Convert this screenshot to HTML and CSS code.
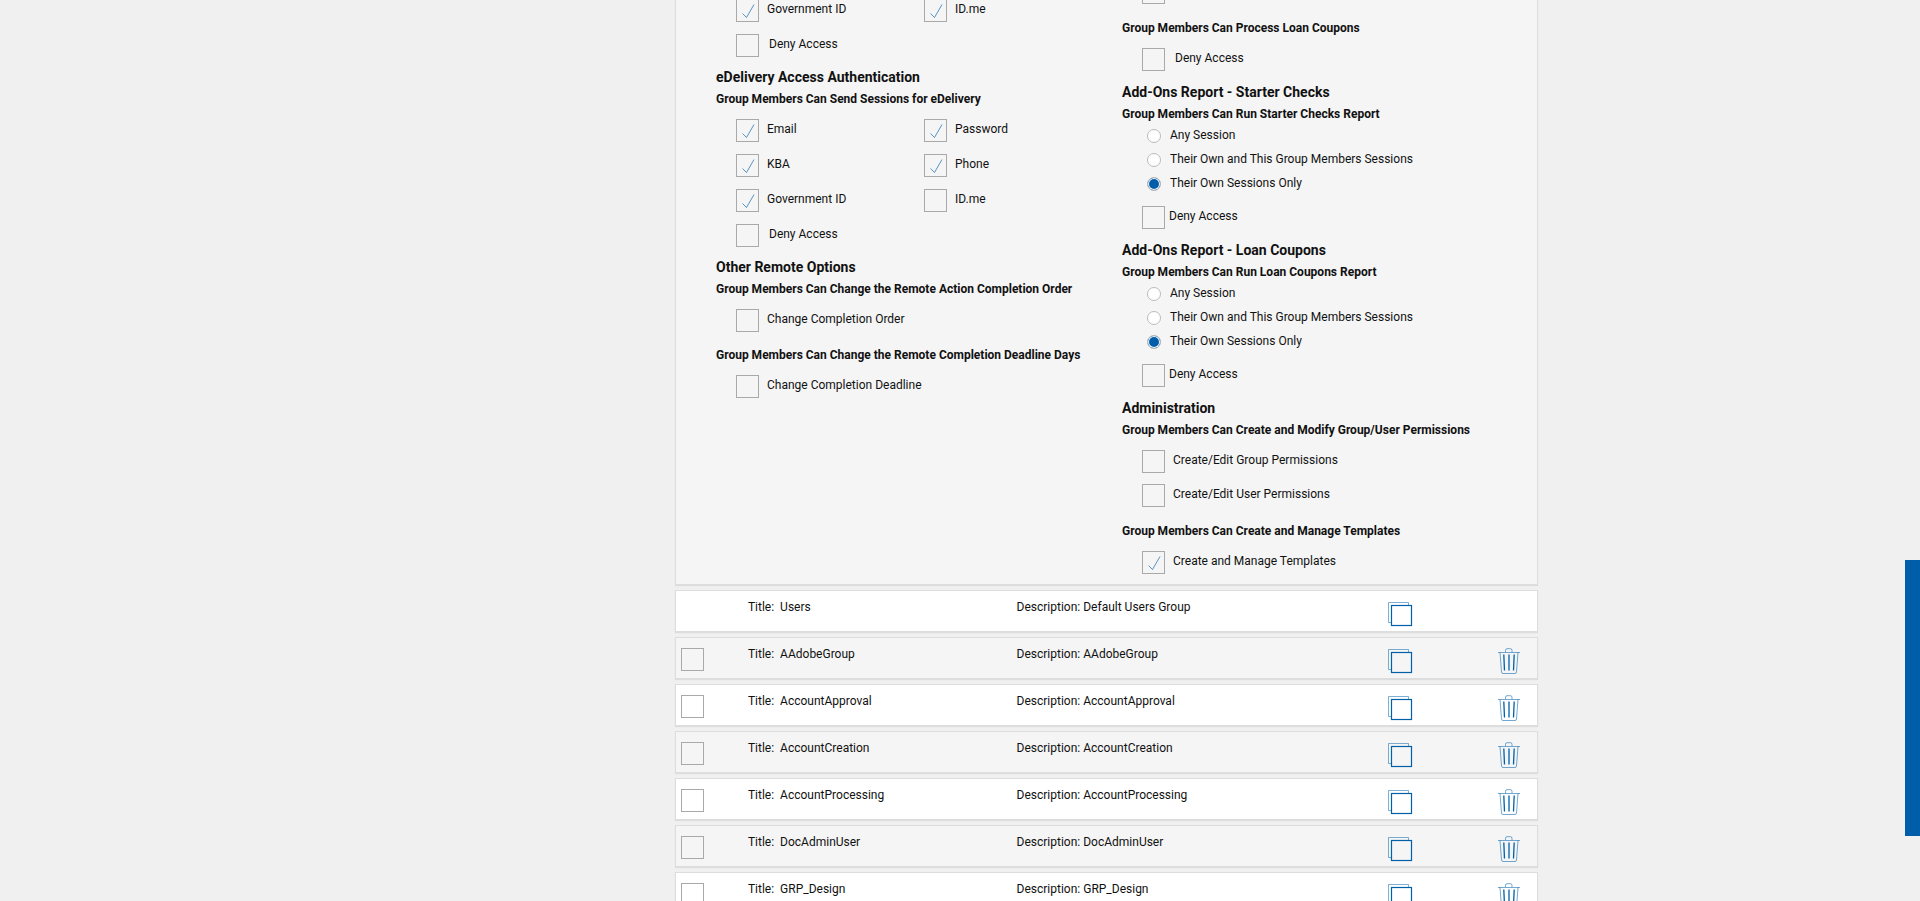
FILE: index.html
```html
<!DOCTYPE html>
<html lang="en">
<head>
    <meta charset="UTF-8">
    <meta name="viewport" content="width=device-width, initial-scale=1.0">
    <title>Group Permissions</title>
    <link rel="stylesheet" href="styles.css">
</head>
<body>
    <!-- icons shared by the group rows -->
    <svg class="icon-defs" aria-hidden="true">
        <symbol id="icon-copy" viewBox="0 0 26 26">
            <path d="M4 21.500H1.500V1.500H21.500V4" fill="none" stroke="#0060a9" stroke-opacity=".5"/>
            <rect x="4.500" y="4.500" width="20" height="20" fill="none" stroke="#0060a9" stroke-width="1.200"/>
        </symbol>
        <symbol id="icon-trash" viewBox="0 0 22 26">
            <path d="M0 4.500H22M7.500 4V2.500Q7.500 .700 9 .700H12.500Q14 .700 14 2.500V4M2 4.500L3.500 24Q3.700 25.500 5 25.500H17Q18.300 25.500 18.500 24L20 4.500" fill="none" stroke="#0060a9" stroke-opacity=".55"/>
            <path d="M5.800 6.500L6.500 22.500M11 6.500V22.500M16.200 6.500L15.500 22.500" fill="none" stroke="#0060a9" stroke-width="1.300"/>
        </symbol>
    </svg>

    <main class="page">
        <section class="panel">
            <div class="panel-left">
                <div class="options two-col first">
                    <label class="option"><input type="checkbox" checked>Government ID</label>
                    <label class="option"><input type="checkbox" checked>ID.me</label>
                    <label class="option deny"><input type="checkbox">Deny Access</label>
                </div>

                <h2>eDelivery Access Authentication</h2>
                <h3>Group Members Can Send Sessions for eDelivery</h3>
                <div class="options two-col">
                    <label class="option"><input type="checkbox" checked>Email</label>
                    <label class="option"><input type="checkbox" checked>Password</label>
                    <label class="option"><input type="checkbox" checked>KBA</label>
                    <label class="option"><input type="checkbox" checked>Phone</label>
                    <label class="option"><input type="checkbox" checked>Government ID</label>
                    <label class="option"><input type="checkbox">ID.me</label>
                    <label class="option deny"><input type="checkbox">Deny Access</label>
                </div>

                <h2>Other Remote Options</h2>
                <h3>Group Members Can Change the Remote Action Completion Order</h3>
                <div class="options">
                    <label class="option"><input type="checkbox">Change Completion Order</label>
                </div>
                <h3>Group Members Can Change the Remote Completion Deadline Days</h3>
                <div class="options">
                    <label class="option"><input type="checkbox">Change Completion Deadline</label>
                </div>
            </div>

            <div class="panel-right">
                <div class="options first">
                    <input type="checkbox" aria-label="Deny Access">
                </div>
                <h3>Group Members Can Process Loan Coupons</h3>
                <div class="options">
                    <label class="option deny"><input type="checkbox">Deny Access</label>
                </div>

                <h2>Add-Ons Report - Starter Checks</h2>
                <h3>Group Members Can Run Starter Checks Report</h3>
                <div class="radios">
                    <label class="radio"><input type="radio" name="starter">Any Session</label>
                    <label class="radio"><input type="radio" name="starter">Their Own and This Group Members Sessions</label>
                    <label class="radio"><input type="radio" name="starter" checked>Their Own Sessions Only</label>
                </div>
                <div class="options">
                    <label class="option close"><input type="checkbox">Deny Access</label>
                </div>

                <h2>Add-Ons Report - Loan Coupons</h2>
                <h3>Group Members Can Run Loan Coupons Report</h3>
                <div class="radios">
                    <label class="radio"><input type="radio" name="coupons">Any Session</label>
                    <label class="radio"><input type="radio" name="coupons">Their Own and This Group Members Sessions</label>
                    <label class="radio"><input type="radio" name="coupons" checked>Their Own Sessions Only</label>
                </div>
                <div class="options">
                    <label class="option close"><input type="checkbox">Deny Access</label>
                </div>

                <h2>Administration</h2>
                <h3>Group Members Can Create and Modify Group/User Permissions</h3>
                <div class="options">
                    <label class="option"><input type="checkbox">Create/Edit Group Permissions</label>
                    <label class="option"><input type="checkbox">Create/Edit User Permissions</label>
                </div>
                <h3>Group Members Can Create and Manage Templates</h3>
                <div class="options">
                    <label class="option"><input type="checkbox" checked>Create and Manage Templates</label>
                </div>
            </div>
        </section>

        <ul class="groups">
            <li class="group">
                <span></span>
                <div class="title"><span>Title:</span><span>Users</span></div>
                <div>Description: Default Users Group</div>
                <button type="button" aria-label="Copy Users"><svg width="26" height="26"><use href="#icon-copy"/></svg></button>
            </li>
            <li class="group">
                <input type="checkbox" aria-label="Select AAdobeGroup">
                <div class="title"><span>Title:</span><span>AAdobeGroup</span></div>
                <div>Description: AAdobeGroup</div>
                <button type="button" aria-label="Copy AAdobeGroup"><svg width="26" height="26"><use href="#icon-copy"/></svg></button>
                <button type="button" aria-label="Delete AAdobeGroup"><svg width="22" height="26"><use href="#icon-trash"/></svg></button>
            </li>
            <li class="group">
                <input type="checkbox" aria-label="Select AccountApproval">
                <div class="title"><span>Title:</span><span>AccountApproval</span></div>
                <div>Description: AccountApproval</div>
                <button type="button" aria-label="Copy AccountApproval"><svg width="26" height="26"><use href="#icon-copy"/></svg></button>
                <button type="button" aria-label="Delete AccountApproval"><svg width="22" height="26"><use href="#icon-trash"/></svg></button>
            </li>
            <li class="group">
                <input type="checkbox" aria-label="Select AccountCreation">
                <div class="title"><span>Title:</span><span>AccountCreation</span></div>
                <div>Description: AccountCreation</div>
                <button type="button" aria-label="Copy AccountCreation"><svg width="26" height="26"><use href="#icon-copy"/></svg></button>
                <button type="button" aria-label="Delete AccountCreation"><svg width="22" height="26"><use href="#icon-trash"/></svg></button>
            </li>
            <li class="group">
                <input type="checkbox" aria-label="Select AccountProcessing">
                <div class="title"><span>Title:</span><span>AccountProcessing</span></div>
                <div>Description: AccountProcessing</div>
                <button type="button" aria-label="Copy AccountProcessing"><svg width="26" height="26"><use href="#icon-copy"/></svg></button>
                <button type="button" aria-label="Delete AccountProcessing"><svg width="22" height="26"><use href="#icon-trash"/></svg></button>
            </li>
            <li class="group">
                <input type="checkbox" aria-label="Select DocAdminUser">
                <div class="title"><span>Title:</span><span>DocAdminUser</span></div>
                <div>Description: DocAdminUser</div>
                <button type="button" aria-label="Copy DocAdminUser"><svg width="26" height="26"><use href="#icon-copy"/></svg></button>
                <button type="button" aria-label="Delete DocAdminUser"><svg width="22" height="26"><use href="#icon-trash"/></svg></button>
            </li>
            <li class="group">
                <input type="checkbox" aria-label="Select GRP_Design">
                <div class="title"><span>Title:</span><span>GRP_Design</span></div>
                <div>Description: GRP_Design</div>
                <button type="button" aria-label="Copy GRP_Design"><svg width="26" height="26"><use href="#icon-copy"/></svg></button>
                <button type="button" aria-label="Delete GRP_Design"><svg width="22" height="26"><use href="#icon-trash"/></svg></button>
            </li>
        </ul>
    </main>

    <button type="button" class="side-tab" aria-label="Open side panel"></button>
</body>
</html>
```
FILE: styles.css
```css
:root {
    --blue: #005daa;
    --page-bg: #f0f0f0;
    --panel-bg: #f5f5f5;
    --border: #ddd;
    --box-border: #a9a9a9;
    --text: #111;
}

* {
    box-sizing: border-box;
}

html {
    overflow: hidden;
}

body {
    margin: 0;
    font-family: Roboto, sans-serif;
    font-size: 12px;
    line-height: 20px;
    color: var(--text);
    background-color: var(--page-bg);
}

.icon-defs {
    display: none;
}

.page {
    display: grid;
    grid-template-columns: 675fr 863fr 382fr;
}

.panel,
.groups {
    grid-column: 2;
}

/* Permissions panel */
.panel {
    display: grid;
    grid-template-columns: 406fr 415fr;
    margin-top: -20px;
    padding-left: 40px;
    background-color: var(--panel-bg);
    border: 1px solid var(--border);
    box-shadow: 0 1px 1px rgba(0, 0, 0, 0.08);
}

.panel-left {
    padding-top: 18px;
}

h2,
h3 {
    margin: 0;
    line-height: 22px;
    font-weight: bold;
}

h2 {
    font-size: 14px;
}

h3 {
    font-size: 12px;
}

.options {
    display: grid;
    row-gap: 11px;
    padding: 9px 0 10px 20px;
}

.options + h3 {
    margin-top: 3px;
}

.panel-left .options {
    row-gap: 12px;
    padding-bottom: 9px;
}

.two-col {
    grid-template-columns: 188px 1fr;
}

.panel .first {
    padding-top: 0;
}

.option {
    display: flex;
    gap: 8px;
    height: 23px;
}

.option.deny {
    gap: 10px;
}

.option.close {
    gap: 4px;
}

input[type="checkbox"] {
    appearance: none;
    flex: none;
    width: 23px;
    height: 23px;
    margin: 0;
    border: 1px solid var(--box-border);
}

input[type="checkbox"]:checked {
    background: url("data:image/svg+xml,%3Csvg xmlns='http://www.w3.org/2000/svg' viewBox='0 0 21 21'%3E%3Cpath d='M5.500 13.500L9.500 17.500L17 4.500' fill='none' stroke='%23005daa' stroke-opacity='.65'/%3E%3C/svg%3E") center / 21px 21px no-repeat;
}

.radios {
    margin-top: -2px;
    padding: 0 0 2px 25px;
}

.radio {
    display: flex;
    align-items: center;
    gap: 9px;
    height: 24px;
}

input[type="radio"] {
    appearance: none;
    width: 14px;
    height: 14px;
    margin: 2px 0 0;
    border: 1px solid #bbb;
    border-radius: 50%;
    background-color: #fff;
}

input[type="radio"]:checked {
    background-color: var(--blue);
    box-shadow: inset 0 0 0 1px #fff;
}

/* Group rows */
.groups {
    display: grid;
    gap: 5px;
    margin: 5px 0 0;
    padding: 0;
    list-style: none;
}

.group {
    display: grid;
    grid-template-columns: 67fr 269fr 371fr 111fr 39fr;
    align-items: start;
    height: 42px;
    padding: 6px 0 0 5px;
    background-color: #fff;
    border: 1px solid var(--border);
    box-shadow: 0 1px 1px rgba(0, 0, 0, 0.08);
}

.group:nth-child(even) {
    background-color: var(--panel-bg);
}

.group input,
.group button {
    margin-top: 4px;
}

.title {
    display: flex;
    gap: 6px;
}

.group button {
    justify-self: start;
    padding: 0;
    border: none;
    background: none;
    cursor: pointer;
}

.group svg {
    display: block;
}

.side-tab {
    position: fixed;
    top: 560px;
    right: 0;
    width: 15px;
    height: 276px;
    padding: 0;
    border: none;
    background-color: var(--blue);
    cursor: pointer;
}
```
